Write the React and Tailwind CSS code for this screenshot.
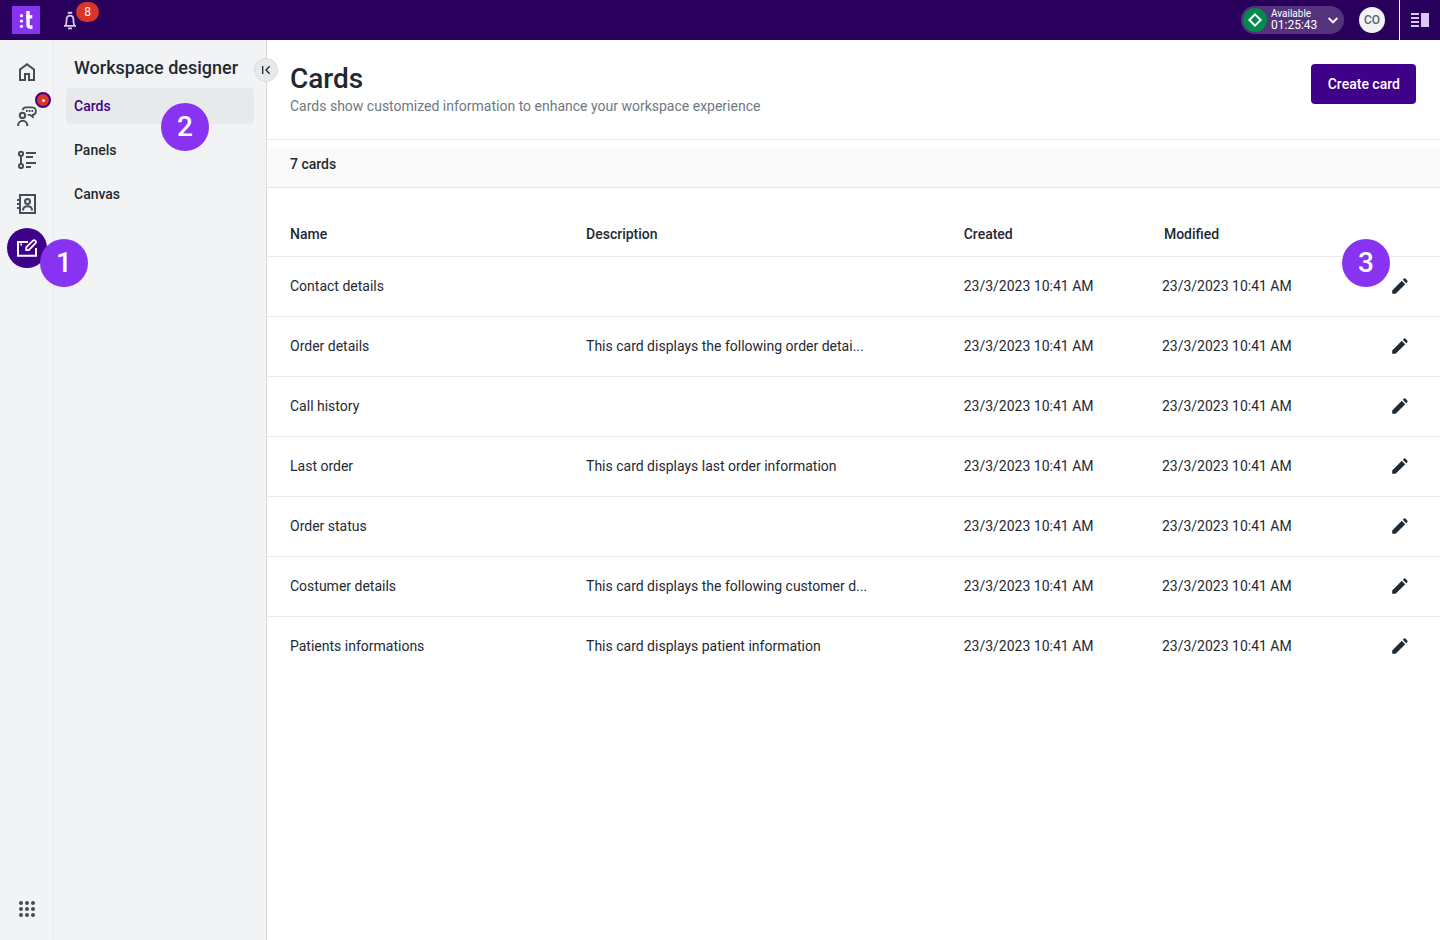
const navItems = ["Cards", "Panels", "Canvas"];

const modified = "23/3/2023 10:41 AM";

const cards = [
  { name: "Contact details", description: "" },
  {
    name: "Order details",
    description: "This card displays the following order detai...",
  },
  { name: "Call history", description: "" },
  {
    name: "Last order",
    description: "This card displays last order information",
  },
  { name: "Order status", description: "" },
  {
    name: "Costumer details",
    description: "This card displays the following customer d...",
  },
  {
    name: "Patients informations",
    description: "This card displays patient information",
  },
];

function Icon({ children, className = "size-6" }) {
  return (
    <svg
      viewBox="0 0 24 24"
      fill="none"
      stroke="currentColor"
      strokeWidth="2"
      aria-hidden="true"
      className={className}
    >
      {children}
    </svg>
  );
}

const HomeIcon = () => (
  <Icon>
    <path
      d="M6 19h3v-6h6v6h3v-9l-6-4.5L6 10v9Zm-2 2V9l8-6 8 6v12h-7v-6h-2v6H4Z"
      fill="currentColor"
      stroke="none"
    />
  </Icon>
);

const ConversationsIcon = () => (
  <Icon>
    <circle cx="7.5" cy="11.4" r="2.7" />
    <path d="M3.1 22v-.6a4.6 4.6 0 0 1 9.2 0v.6" />
    <path
      d="M7.6 6.2C7.900 4.300 9.100 3.300 11 3.300h6a3.900 3.900 0 0 1 3.900 3.900c0 2-1.300 3.200-3.100 3.600V13L15 10.800h-2.200"
      strokeWidth="1.8"
    />
    <path d="M11 7h1.700M13.700 7h1.700M16.400 7h1.700" strokeWidth="1.8" />
  </Icon>
);

const FlowIcon = () => (
  <Icon>
    <circle cx="6" cy="5.800" r="2.100" />
    <circle cx="6" cy="18" r="2.100" />
    <path d="M6 8v8M11 5h10M11 9h7M11 15h10M11 19h5" />
  </Icon>
);

const ContactsIcon = () => (
  <Icon>
    <path d="M5 3h15v18H5z" />
    <path d="M2 8h4M2 12h4M2 16h4" />
    <circle cx="12.500" cy="9.500" r="2.500" />
    <path d="M8 18.500c0-2.800 1.900-4.200 4.500-4.200s4.500 1.400 4.500 4.200" />
  </Icon>
);

const DesignerIcon = () => (
  <Icon>
    <path d="M13 6H3v13.800h18V12" />
    <path
      d="M11.200 14.200v-2.800l6.800-6.800a1.600 1.600 0 0 1 2.200 0l.400.400a1.600 1.600 0 0 1 0 2.200L13.800 14.200z"
      strokeWidth="1.800"
    />
    <path d="M5.300 8.500h1.700" />
  </Icon>
);

const railItems = [
  { label: "Home", icon: HomeIcon },
  { label: "Conversations", icon: ConversationsIcon, alert: true },
  { label: "Flows", icon: FlowIcon },
  { label: "Contacts", icon: ContactsIcon },
  { label: "Workspace designer", icon: DesignerIcon, active: true, step: 1 },
];

function Step({ number, className }) {
  return (
    <span
      className={`absolute z-10 flex size-12 items-center justify-center rounded-full bg-[#8833f2] text-[28px] leading-8 font-medium text-white ${className}`}
    >
      {number}
    </span>
  );
}

function TopBar() {
  return (
    <header className="flex h-10 items-center bg-[#29005c] text-white">
      <a href="#home" aria-label="Home" className="ml-3 bg-[#8833f2]">
        <svg viewBox="0 0 28 28" className="size-7" fill="#fff" aria-hidden="true">
          <circle cx="9.500" cy="9.700" r="1.600" />
          <circle cx="9.500" cy="15" r="1.600" />
          <circle cx="9.500" cy="20.300" r="1.600" />
          <path
            d="M16 5v13.500q0 2.700 2.600 2.700H20.500M14 10.800h6.300"
            fill="none"
            stroke="#fff"
            strokeWidth="3.400"
          />
        </svg>
      </a>
      <button
        type="button"
        aria-label="Notifications"
        className="relative ml-[18px] text-[#d9c7f5]"
      >
        <Icon>
          <path d="M9.800 4.800h4.400" />
          <path
            d="M6 17.800h12M7.800 17.500c.7-2 .7-4 .8-6.200 0-2.200 1.400-3.600 3.400-3.600s3.400 1.400 3.400 3.600c.1 2.200.1 4.200.8 6.200M10 20.300h4"
            strokeWidth="1.800"
          />
        </Icon>
        <span className="absolute -top-1.5 left-[18px] flex h-5 w-[23px] items-center justify-center rounded-full bg-[#dc3426] text-xs text-white">
          8
        </span>
      </button>
      <button
        type="button"
        className="ml-auto flex h-7 w-[103px] items-center rounded-full bg-[#54337d] pl-0.5"
      >
        <span className="flex size-6 items-center justify-center rounded-full bg-[#008a4b]">
          <Icon className="size-4">
            <path d="M12 3.500l8.500 8.500-8.500 8.500L3.500 12z" strokeWidth="3" />
          </Icon>
        </span>
        <span className="ml-1 flex flex-col text-left">
          <span className="text-[10px] leading-[10px]">Available</span>
          <span className="text-xs leading-3">01:25:43</span>
        </span>
        <Icon className="ml-2 size-4">
          <path d="M5.500 9l6.500 6.500L18.500 9" strokeWidth="3" />
        </Icon>
      </button>
      <button
        type="button"
        aria-label="Account"
        className="ml-[15px] flex size-[26px] items-center justify-center rounded-full bg-[#f2f3f5] text-xs font-medium text-[#5b626b]"
      >
        CO
      </button>
      <button
        type="button"
        aria-label="Toggle side panel"
        className="ml-3.5 flex h-10 w-[41px] items-center border-l border-white pl-[11px]"
      >
        <svg viewBox="0 0 18 14" className="h-3.5 w-[18px]" fill="#d9c7f5" aria-hidden="true">
          <path d="M0 0h8v2H0zM0 4h8v2H0zM0 8h8v2H0zM0 12h8v2H0zM10 0h8v14h-8z" />
        </svg>
      </button>
    </header>
  );
}

function Rail() {
  return (
    <nav
      aria-label="Main"
      className="flex w-[54px] shrink-0 flex-col items-start gap-1 border-r border-[#e6e8ea] pt-3 pb-[11px] pl-[7px] text-[#434e58]"
    >
      {railItems.map(({ label, icon: ItemIcon, active, alert, step }) => (
        <button
          key={label}
          type="button"
          aria-label={label}
          className={`relative flex size-10 items-center justify-center rounded-full ${
            active ? "bg-[#3f008a] text-white" : ""
          }`}
        >
          <ItemIcon />
          {alert && (
            <span className="absolute -top-1 left-7 flex size-4 items-center justify-center rounded-full border-2 border-[#3f008a] bg-[#dc3426]">
              <span className="size-[3px] rounded-full bg-white" />
            </span>
          )}
          {step && <Step number={step} className="top-[11px] left-[33px]" />}
        </button>
      ))}
      <button
        type="button"
        aria-label="Apps"
        className="mt-auto flex size-10 items-center justify-center"
      >
        <svg viewBox="0 0 16 16" className="size-4" fill="currentColor" aria-hidden="true">
          {[2, 8, 14].map((y) =>
            [2, 8, 14].map((x) => <circle key={`${x}-${y}`} cx={x} cy={y} r="2" />)
          )}
        </svg>
      </button>
    </nav>
  );
}

function SidePanel() {
  return (
    <aside className="relative w-[213px] shrink-0 border-r border-[#d9dcdf] px-3 pt-4">
      <h2 className="pl-2 text-lg leading-6 font-medium whitespace-nowrap">
        Workspace designer
      </h2>
      <button
        type="button"
        aria-label="Collapse panel"
        className="absolute top-[18px] -right-3 z-10 flex size-6 items-center justify-center rounded-full border border-[#d9dcdf] bg-[#e8e9eb]"
      >
        <Icon className="size-4">
          <path d="M7 6v12M17.500 6.500L12 12l5.500 5.500" />
        </Icon>
      </button>
      <ul className="mt-2 space-y-2">
        {navItems.map((item, i) => (
          <li key={item} className="relative">
            <a
              href={`#${item.toLowerCase()}`}
              className={`flex h-9 items-center rounded px-2 text-sm font-medium ${
                i === 0 ? "bg-[#e8e9eb] text-[#3f008a]" : ""
              }`}
            >
              {item}
            </a>
            {i === 0 && <Step number={2} className="top-[15px] left-[95px]" />}
          </li>
        ))}
      </ul>
    </aside>
  );
}

function CardsTable() {
  return (
    <table className="w-full table-fixed text-left text-sm">
      <thead>
        <tr className="border-b border-[#e6e8ea]">
          <th className="h-[68px] w-[27.2%] pt-6 pl-[23px] font-medium">Name</th>
          <th className="w-[32.2%] pt-6 font-medium">Description</th>
          <th className="w-[16.9%] pt-6 font-medium">Created</th>
          <th className="w-[16.9%] pt-6 pl-0.5 font-medium">Modified</th>
          <th aria-label="Actions" />
        </tr>
      </thead>
      <tbody>
        {cards.map((card, i) => (
          <tr key={card.name} className="border-b border-[#e6e8ea] last:border-0">
            <td className="h-15 pl-[23px]">{card.name}</td>
            <td>{card.description}</td>
            <td>{modified}</td>
            <td>{modified}</td>
            <td className="relative pr-7">
              <button
                type="button"
                aria-label={`Edit ${card.name}`}
                className="ml-auto flex size-6 items-center justify-center"
              >
                <svg viewBox="0 0 24 24" className="size-6" fill="currentColor" aria-hidden="true">
                  <path d="M4.200 19.800v-3.400l9.600-9.600 3.400 3.400-9.600 9.600z" />
                  <path d="M18.200 9.200l-3.400-3.400 1-1a1.300 1.300 0 0 1 1.800 0l1.600 1.600a1.300 1.300 0 0 1 0 1.800z" />
                </svg>
              </button>
              {i === 0 && <Step number={3} className="-top-[18px] right-[50px]" />}
            </td>
          </tr>
        ))}
      </tbody>
    </table>
  );
}

export default function App() {
  return (
    <div className="flex min-h-screen flex-col bg-white font-[Roboto,sans-serif] text-[#1f2932]">
      <TopBar />
      <div className="flex grow">
        <div className="flex shrink-0 bg-[#f2f3f5]">
          <Rail />
          <SidePanel />
        </div>
        <main className="min-w-0 grow">
          <div className="flex h-[100px] items-start justify-between border-b border-[#e6e8ea] pt-6 pr-6 pl-[23px]">
            <div>
              <h1 className="mb-0.5 text-[28px] leading-[30px] font-medium">Cards</h1>
              <p className="text-sm text-[#70787f]">
                Cards show customized information to enhance your workspace experience
              </p>
            </div>
            <button
              type="button"
              className="h-10 rounded bg-[#3f008a] pr-4 pl-[17px] text-sm font-medium text-white"
            >
              Create card
            </button>
          </div>
          <p className="mt-2 border-b border-[#e6e8ea] bg-[#fafafa] pt-1.5 pb-[13px] pl-[23px] text-sm font-medium">
            7 cards
          </p>
          <CardsTable />
        </main>
      </div>
    </div>
  );
}
